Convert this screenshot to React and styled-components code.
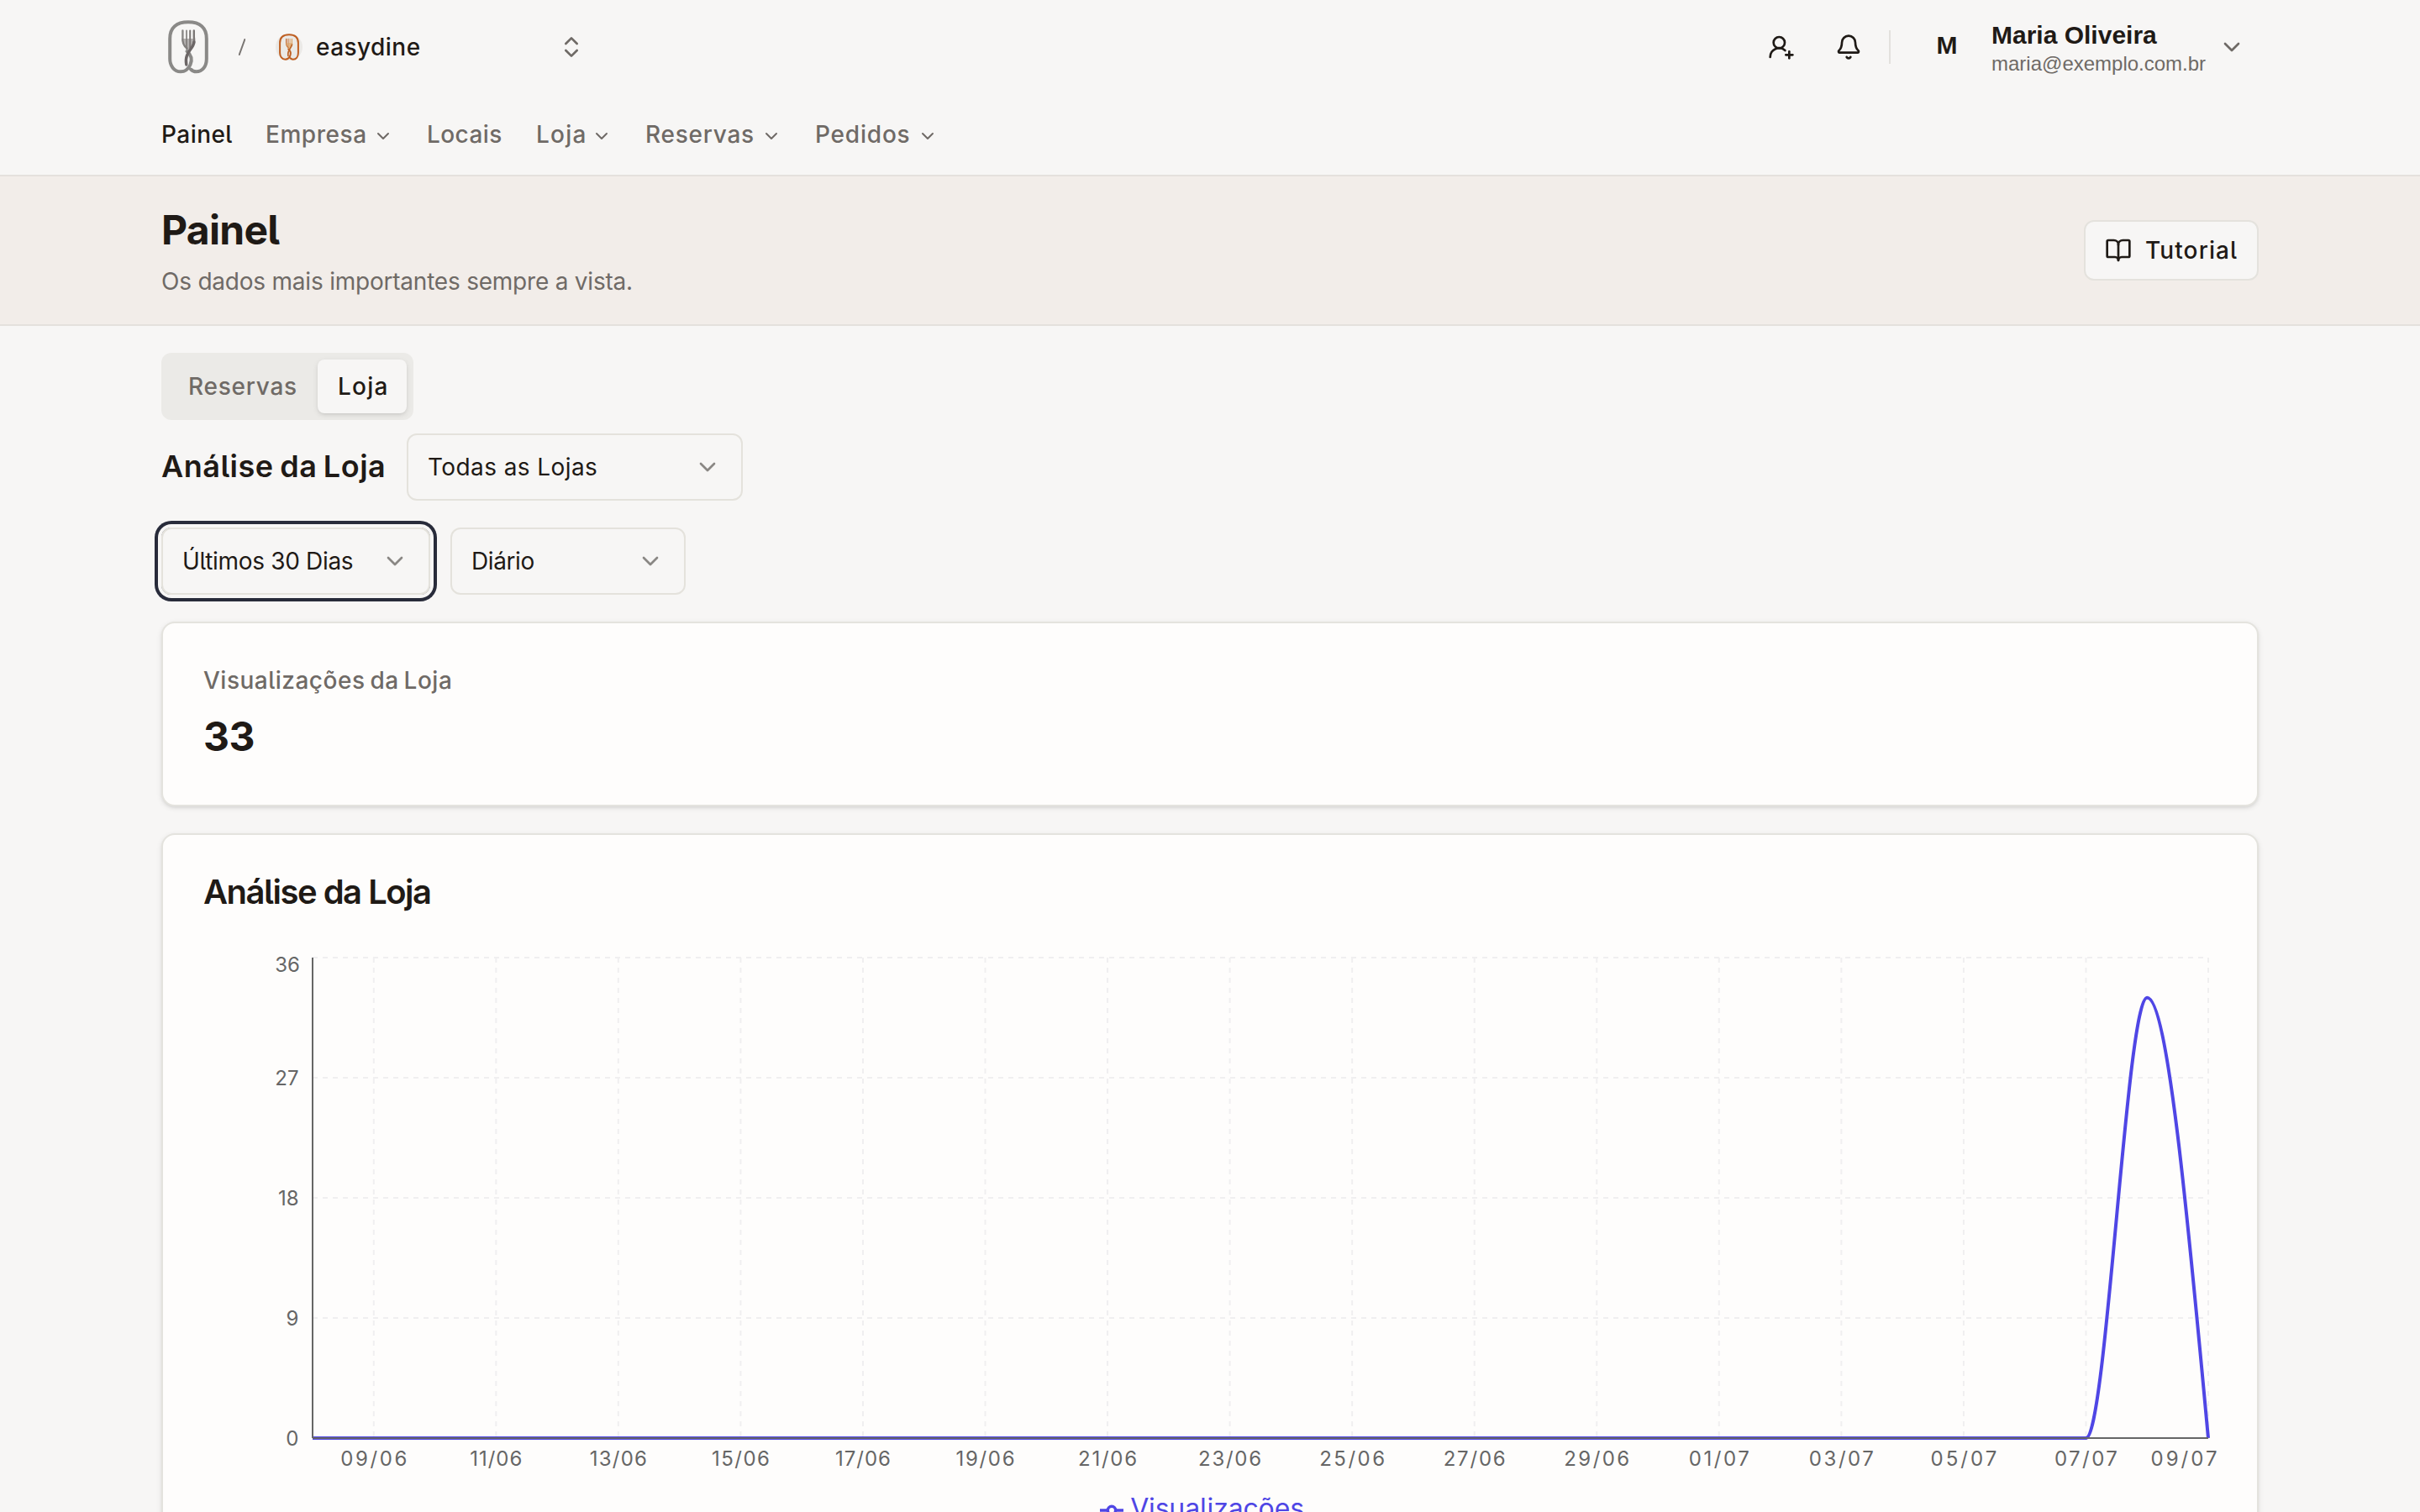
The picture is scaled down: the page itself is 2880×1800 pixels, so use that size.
import styled, { createGlobalStyle } from "styled-components";
import { Bell, BookOpen, ChevronDown, ChevronsUpDown, UserRoundPlus } from "lucide-react";

const menu = [
    { nome: "Painel", largura: 84, espaco: 0.45, ativo: true },
    { nome: "Empresa", largura: 152, espaco: 0.55, seta: true },
    { nome: "Locais", largura: 90, espaco: 0.4 },
    { nome: "Loja", largura: 90, espaco: 1.2, seta: true },
    { nome: "Reservas", largura: 162, espaco: 0.75, seta: true },
    { nome: "Pedidos", largura: 146, espaco: 0.8, seta: true }
];

const datas = [
    ["09/06", 77], ["11/06", 60], ["13/06", 66], ["15/06", 67],
    ["17/06", 64], ["19/06", 68], ["21/06", 68], ["23/06", 73],
    ["25/06", 76], ["27/06", 72], ["29/06", 76], ["01/07", 70],
    ["03/07", 75], ["05/07", 77], ["07/07", 73], ["09/07", 77]
];

const valores = [36, 27, 18, 9, 0];

export default function App() {
    return (
        <Pagina>
            <GlobalStyle />
            <Cabecalho>
                <Topo>
                    <Lado>
                        <Logo largura={48} altura={64} cor="#8a8987" dente="#7b7775" cabo="#6c6666" />
                        <Barra viewBox="0 0 8 20">
                            <path d="M7.3 1 L0.8 19" />
                        </Barra>
                        <Equipe>
                            <Avatar>
                                <Logo largura={24} altura={32} cor="#bf5f22" dente="#dda263" cabo="#bd6428" />
                            </Avatar>
                            <NomeEquipe>easydine</NomeEquipe>
                            <ChevronsUpDown size={32} color="#6f6a66" />
                        </Equipe>
                    </Lado>
                    <Lado>
                        <Acoes>
                            <UserRoundPlus size={32} />
                            <Bell size={32} />
                        </Acoes>
                        <Divisor />
                        <Inicial>M</Inicial>
                        <Usuario>
                            <strong>Maria Oliveira</strong>
                            <span>maria@exemplo.com.br</span>
                        </Usuario>
                        <ChevronDown size={32} color="#6f6a66" />
                    </Lado>
                </Topo>
                <Menu>
                    {menu.map(item => (
                        <ItemMenu key={item.nome} $largura={item.largura} $espaco={item.espaco} $ativo={item.ativo}>
                            {item.nome}
                            {item.seta && <ChevronDown size={24} />}
                        </ItemMenu>
                    ))}
                </Menu>
            </Cabecalho>

            <Faixa>
                <div>
                    <Titulo>Painel</Titulo>
                    <Subtitulo>Os dados mais importantes sempre a vista.</Subtitulo>
                </div>
                <Tutorial>
                    <BookOpen size={32} />
                    Tutorial
                </Tutorial>
            </Faixa>

            <Corpo>
                <Abas>
                    <Aba $largura={178} $espaco={0.75}>Reservas</Aba>
                    <Aba $largura={106} $espaco={1.2} $ativo>Loja</Aba>
                </Abas>
                <Linha $topo={16}>
                    <TituloLoja>Análise da Loja</TituloLoja>
                    <Seletor $largura={400} $espaco={0.41}>
                        Todas as Lojas
                        <ChevronDown size={32} />
                    </Seletor>
                </Linha>
                <Linha $topo={32}>
                    <Seletor $largura={320} $espaco={-0.32} $foco>
                        Últimos 30 Dias
                        <ChevronDown size={32} />
                    </Seletor>
                    <Seletor $largura={280} $espaco={-0.4}>
                        Diário
                        <ChevronDown size={32} />
                    </Seletor>
                </Linha>
                <Cartao $altura={220}>
                    <Rotulo>Visualizações da Loja</Rotulo>
                    <Numero>33</Numero>
                </Cartao>
                <Cartao $altura={900}>
                    <TituloCartao>Análise da Loja</TituloCartao>
                    <Grafico />
                    <Legenda>
                        <svg width="28" height="28" viewBox="0 0 32 32">
                            <path d="M0,16h10.667A5.333,5.333,0,1,1,21.333,16H32M21.333,16A5.333,5.333,0,1,1,10.667,16" />
                        </svg>
                        Visualizações
                    </Legenda>
                </Cartao>
            </Corpo>
        </Pagina>
    )
}

function Logo({ largura, altura, cor, dente, cabo }) {
    return (
        <svg width={largura} height={altura} viewBox="0 0 48 64" fill="none" strokeLinecap="round">
            <path stroke={cor} strokeWidth="4" d="M22.5 37 C28.5 42 28.5 48 26.5 53 C24 58.5 20 61.3 15 61.3 C7 61.3 2.2 54 2.2 46 V22 C2.2 9 10 2.3 24 2.3 C38 2.3 45.8 9 45.8 22 V46 C45.8 55 41 61.3 33.5 61.3 C30.5 61.3 28.5 60 27 58.5" />
            <path stroke={cor} strokeWidth="2.4" d="M17.4 12.5 V20 C16.6 27 19 31 22.6 33.5" />
            <path stroke={cor} strokeWidth="1.8" d="M22 12.5 V34" />
            <path stroke={dente} strokeWidth="2" d="M26.2 12.5 V33" />
            <path stroke={dente} strokeWidth="2.4" d="M30.8 12.5 V20 C31.6 25 31 27 30 29" />
            <path fill={dente} d="M16.6 22 H32 C32 30 27 33 24.5 37 C20 33 16.6 30 16.6 22 Z" opacity="0.55" />
            <path stroke={cabo} strokeWidth="3.4" d="M31 26 C30 35 19 38 21.8 53" />
        </svg>
    )
}

function Grafico() {
    const x0 = 130;
    const x1 = 2386;
    const y0 = 592;
    const altura = 572;
    const passo = (x1 - x0) / 31;
    const posX = dia => x0 + passo * dia;
    const posY = valor => y0 - (valor / 36) * altura;

    const pico = posY(33);
    const t = passo / 3;
    const curva = `M${x0},${y0} L${posX(29)},${y0}`
        + ` C${posX(29) + t},${y0} ${posX(30) - t},${pico} ${posX(30)},${pico}`
        + ` C${posX(30) + t},${pico} ${x1 - t},${y0 - (y0 - pico) / 2} ${x1},${y0}`;

    return (
        <Desenho width="2396" height="640" viewBox="0 0 2396 640">
            {valores.map(v => (
                <line key={v} className="grade" x1={x0} x2={x1} y1={posY(v)} y2={posY(v)} />
            ))}
            {datas.map(([data], i) => (
                <line key={data} className="grade" x1={posX(i * 2 + 1)} x2={posX(i * 2 + 1)} y1={y0 - altura} y2={y0} />
            ))}
            <path className="curva" d={curva} />
            <line className="eixo" x1={x0} x2={x1} y1={y0} y2={y0} />
            <line className="eixo" x1={x0} x2={x0} y1={y0 - altura} y2={y0} />
            {valores.map(v => (
                <text key={v} x={v === 36 ? 115 : 113.5} y={posY(v) + (v === 36 ? 17 : 9)} textAnchor="end">{v}</text>
            ))}
            {datas.map(([data, largura], i) => (
                <text
                    key={data}
                    x={i === 15 ? 2357 : posX(i * 2 + 1)}
                    y="625"
                    textAnchor="middle"
                    textLength={largura + 2}
                >
                    {data}
                </text>
            ))}
        </Desenho>
    )
}

const GlobalStyle = createGlobalStyle`
    * {
        box-sizing: border-box;
    }
    body {
        margin: 0;
        background: #f7f6f5;
        overflow: hidden;
    }
    svg {
        display: block;
        flex-shrink: 0;
    }
`;

const Pagina = styled.div`
    height: 1800px;
    overflow: hidden;
    background: #f7f6f5;
    color: #1f1a16;
    font-family: Inter, sans-serif;
    font-size: 28px;
    font-feature-settings: "cv05";
    white-space: nowrap;
`;

const Cabecalho = styled.header`
    height: 210px;
    padding: 0 192px;
    border-bottom: 2px solid #e5e1dd;
`;

const Topo = styled.div`
    height: 112px;
    padding: 0 16px 0 8px;
    display: flex;
    align-items: center;
    justify-content: space-between;
`;

const Lado = styled.div`
    display: flex;
    align-items: center;
`;

const Barra = styled.svg`
    width: 8px;
    height: 20px;
    margin: 0 36px;
    path {
        stroke: #7a7673;
        stroke-width: 2;
        stroke-linecap: round;
    }
`;

const Equipe = styled.div`
    width: 368px;
    display: flex;
    align-items: center;
    gap: 16px;
`;

const Avatar = styled.div`
    width: 32px;
    height: 32px;
    border-radius: 50%;
    background: #ebe9e6;
    display: flex;
    justify-content: center;
`;

const NomeEquipe = styled.span`
    flex: 1;
    font-weight: 500;
    letter-spacing: 0.45px;
`;

const Acoes = styled.div`
    display: flex;
    gap: 48px;
`;

const Divisor = styled.div`
    width: 2px;
    height: 40px;
    margin: 0 31px 0 32px;
    background: #e3e1dd;
`;

const Inicial = styled.div`
    width: 72px;
    height: 72px;
    padding-bottom: 4px;
    display: flex;
    align-items: center;
    justify-content: center;
    font-family: "Liberation Sans", sans-serif;
    font-size: 30px;
    font-weight: 700;
`;

const Usuario = styled.div`
    width: 255px;
    margin: 3px 15px 0 17px;
    font-family: "Liberation Sans", sans-serif;
    strong {
        display: block;
        font-size: 30px;
        line-height: 36px;
    }
    span {
        display: block;
        color: #6f6a66;
        font-size: 24px;
        line-height: 32px;
    }
`;

const Menu = styled.nav`
    height: 96px;
    display: flex;
    align-items: center;
    gap: 40px;
`;

const ItemMenu = styled.a`
    width: ${p => p.$largura}px;
    display: flex;
    align-items: center;
    justify-content: space-between;
    color: ${p => p.$ativo ? "#1f1a16" : "#6f6a66"};
    font-weight: 500;
    letter-spacing: ${p => p.$espaco}px;
    svg {
        margin-top: 3px;
    }
`;

const Faixa = styled.section`
    height: 178px;
    padding: 0 192px;
    display: flex;
    align-items: center;
    justify-content: space-between;
    background: #f2ede9;
    border-bottom: 2px solid #e4e1dc;
`;

const Titulo = styled.h1`
    margin: 8px 0 17px;
    font-size: 48px;
    font-weight: 700;
    line-height: 48px;
    letter-spacing: -0.7px;
`;

const Subtitulo = styled.p`
    margin: 0;
    color: #6f6a66;
    line-height: 40px;
    letter-spacing: -0.22px;
`;

const Tutorial = styled.button`
    width: 208px;
    height: 72px;
    padding: 0 23px;
    display: flex;
    align-items: center;
    gap: 16px;
    color: inherit;
    background: #f7f6f5;
    border: 2px solid #e4e2dd;
    border-radius: 12px;
    font: inherit;
    font-feature-settings: inherit;
    font-weight: 500;
    letter-spacing: 1.1px;
`;

const Corpo = styled.main`
    padding: 32px 192px 0;
`;

const Abas = styled.div`
    width: 300px;
    height: 80px;
    padding: 8px;
    display: flex;
    background: #ebeae7;
    border-radius: 12px;
`;

const Aba = styled.div`
    width: ${p => p.$largura}px;
    padding-left: 24px;
    line-height: 64px;
    font-weight: 500;
    letter-spacing: ${p => p.$espaco}px;
    border-radius: 8px;
    color: ${p => p.$ativo ? "#1f1a16" : "#6f6a66"};
    background: ${p => p.$ativo ? "#f7f6f5" : "none"};
    box-shadow: ${p => p.$ativo ? "0 2px 6px rgba(0, 0, 0, 0.1), 0 2px 4px -2px rgba(0, 0, 0, 0.1)" : "none"};
`;

const Linha = styled.div`
    margin-top: ${p => p.$topo}px;
    display: flex;
    align-items: center;
    gap: 24px;
`;

const TituloLoja = styled.h2`
    width: 268px;
    margin: 0;
    padding-bottom: 2px;
    font-size: 36px;
    font-weight: 600;
    letter-spacing: 0.5px;
    word-spacing: -2px;
`;

const Seletor = styled.div`
    width: ${p => p.$largura}px;
    height: 80px;
    padding: 0 24px 0 23px;
    display: flex;
    align-items: center;
    justify-content: space-between;
    border: 2px solid #e4e2dc;
    border-radius: 12px;
    letter-spacing: ${p => p.$espaco}px;
    box-shadow: ${p => p.$foco ? "0 0 0 4px #f7f6f5, 0 0 0 8px #282b3a" : "none"};
    svg {
        opacity: 0.5;
    }
`;

const Cartao = styled.section`
    height: ${p => p.$altura}px;
    margin-top: 32px;
    padding: 48px;
    background: #fefdfc;
    border: 2px solid #e4e3de;
    border-radius: 16px;
    box-shadow: 0 2px 6px rgba(0, 0, 0, 0.1), 0 2px 4px -2px rgba(0, 0, 0, 0.1);
`;

const Rotulo = styled.p`
    margin: 0 0 12px;
    color: #6f6a66;
    font-weight: 500;
    line-height: 40px;
    letter-spacing: 0.5px;
    word-spacing: -2px;
`;

const Numero = styled.p`
    margin: 0;
    font-size: 48px;
    font-weight: 700;
    line-height: 70px;
    letter-spacing: -0.5px;
`;

const TituloCartao = styled.h3`
    margin: 0 0 38px;
    font-size: 40px;
    font-weight: 600;
    line-height: 40px;
    letter-spacing: -1.5px;
`;

const Desenho = styled.svg`
    overflow: visible;
    .grade {
        stroke: #f0eff0;
        stroke-width: 2;
        stroke-dasharray: 6 6;
    }
    .eixo {
        stroke: #666;
        stroke-width: 2;
    }
    .curva {
        fill: none;
        stroke: #4f46e5;
        stroke-width: 4;
    }
    text {
        fill: #666;
        font-size: 24px;
    }
`;

const Legenda = styled.div`
    margin-top: 12px;
    padding-right: 19px;
    display: flex;
    align-items: center;
    justify-content: center;
    gap: 8px;
    color: #4f46e5;
    font-size: 32px;
    line-height: 48px;
    letter-spacing: -0.16px;
    svg {
        margin-top: 4px;
        fill: none;
        stroke: #4f46e5;
        stroke-width: 4;
    }
`;
